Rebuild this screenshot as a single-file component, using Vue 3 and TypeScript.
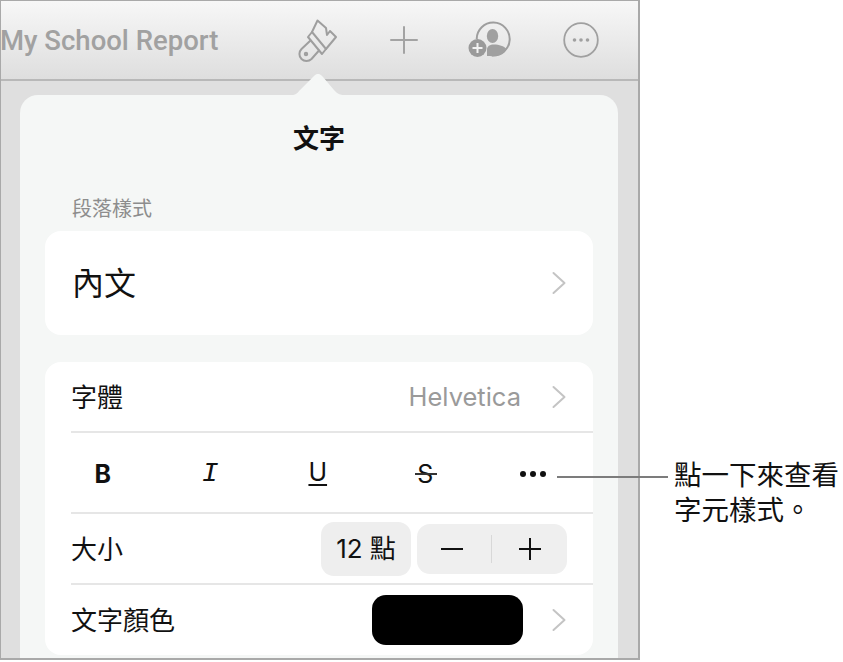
<script setup lang="ts">
const formats = [
  { key: 'b', label: 'B' },
  { key: 'i', label: 'I' },
  { key: 'u', label: 'U' },
  { key: 's', label: 'S' },
]
</script>

<template>
  <main class="page">
    <section class="device">
      <header class="toolbar">
        <div class="doc-title">My School Report</div>
        <svg class="tool brush" viewBox="296 16 44 48" width="44" height="48" fill="none" stroke="#9e9e9e" stroke-width="2" stroke-linejoin="round" stroke-linecap="round">
          <path d="M317.500 20.500 L312 32 L326 49 L336 37 L330 31 L327 35 L326 28 Z" />
          <path d="M312 32 L308 37 L322 54 L326 49" />
          <path d="M310.500 40.500 L301.500 49 A 7 7 0 1 0 311.500 59 L319 50.500" />
          <circle cx="306" cy="54" r="1.200" />
        </svg>
        <svg class="tool plus" viewBox="0 0 30 30" width="30" height="30" stroke="#a3a3a3" stroke-width="2" stroke-linecap="round">
          <path d="M15 2 V28 M2 15 H28" />
        </svg>
        <svg class="tool person" viewBox="466 20 46 40" width="46" height="40">
          <path d="M476.700 39 A 16.500 16.500 0 1 1 492 55.500" fill="none" stroke="#9e9e9e" stroke-width="2" />
          <ellipse cx="492.500" cy="36" rx="5.700" ry="7" fill="#a0a0a0" />
          <path d="M487 56 V50 C487 46 490 44.500 494 44.500 C499 44.500 504 46 506.500 49 A 16.500 16.500 0 0 1 490 56 Z" fill="#a0a0a0" />
          <circle cx="477.500" cy="48" r="9" fill="#9a9a9a" />
          <path d="M477.500 43 V53 M472.500 48 H482.500" stroke="#f2f2f2" stroke-width="2" />
        </svg>
        <svg class="tool more" viewBox="0 0 36 36" width="36" height="36">
          <circle cx="18" cy="18" r="16.800" fill="none" stroke="#a0a0a0" stroke-width="1.800" />
          <circle cx="11.500" cy="18" r="1.800" fill="#a0a0a0" />
          <circle cx="18" cy="18" r="1.800" fill="#a0a0a0" />
          <circle cx="24.500" cy="18" r="1.800" fill="#a0a0a0" />
        </svg>
      </header>

      <div class="popover-wrap">
        <svg class="tail" viewBox="0 0 60 22" width="60" height="22">
          <path d="M0 22 C7 21 9 20 12 16 L25 3 C27 0.500 29 0 30 0 C31 0 33 0.500 35 3 L46 16 C49 20 53 21 60 22 Z" fill="#f5f7f6" />
        </svg>
        <div class="popover">
          <h1 class="pop-title">文字</h1>
          <h2 class="section-label">段落樣式</h2>
          <div class="group style-group">
            <span class="style-name">內文</span>
            <svg class="chevron" viewBox="0 0 14 24" width="14" height="24"><path d="M1.500 2 L12.500 12 L1.500 22" /></svg>
          </div>
          <div class="group main-group">
            <div class="row font-row">
              <span class="label">字體</span>
              <span class="value">Helvetica</span>
              <svg class="chevron" viewBox="0 0 14 24" width="14" height="24"><path d="M1.500 2 L12.500 12 L1.500 22" /></svg>
            </div>
            <div class="row format-row">
              <span v-for="f in formats" :key="f.key" class="fmt" :class="'fmt-' + f.key">{{ f.label }}</span>
              <span class="fmt fmt-more"><i></i><i></i><i></i></span>
            </div>
            <div class="row size-row">
              <span class="label">大小</span>
              <span class="size-pill">12 點</span>
              <div class="stepper">
                <svg viewBox="0 0 24 24" width="24" height="24"><path d="M1 12 H23" /></svg>
                <i class="step-sep"></i>
                <svg viewBox="0 0 24 24" width="24" height="24"><path d="M1 12 H23 M12 1 V23" /></svg>
              </div>
            </div>
            <div class="row color-row">
              <span class="label">文字顏色</span>
              <span class="swatch"></span>
              <svg class="chevron" viewBox="0 0 14 24" width="14" height="24"><path d="M1.500 2 L12.500 12 L1.500 22" /></svg>
            </div>
          </div>
        </div>
      </div>
    </section>

    <div class="callout">
      <span class="callout-line"></span>
      <p class="callout-text">點一下來查看<br />字元樣式。</p>
    </div>
  </main>
</template>

<style scoped>
.page {
  position: relative;
  width: 843px;
  height: 662px;
  background: #fff;
  overflow: hidden;
  font-family: Inter, "Noto Sans CJK TC", sans-serif;
  color: #111;
}
.device {
  width: 640px;
  height: 660px;
  box-sizing: border-box;
  border: 1px solid #a9a9a9;
  border-width: 1px 2px 2px 1px;
  background: #dfdfdf;
  overflow: hidden;
}
.toolbar {
  height: 78px;
  border-bottom: 2px solid #b8b8b8;
  background: linear-gradient(#f7f7f7, #dedede);
  display: flex;
  align-items: center;
}
.doc-title {
  width: 296px;
  flex: none;
  font: 500 27.500px/1 Roboto, Inter, sans-serif;
  color: #a1a1a1;
  white-space: nowrap;
  margin-left: -1px;
  padding-top: 2px;
}
.tool { flex: none; }
.brush { margin-left: 0; }
.plus { margin-left: 49px; }
.person { margin-left: 47px; }
.more { margin-left: 51px; }

.popover-wrap {
  position: relative;
  padding: 14px 0 0 19px;
}
.tail {
  position: absolute;
  left: 287px;
  top: -7px;
}
.popover {
  width: 598px;
  height: 580px;
  box-sizing: border-box;
  background: #f5f7f6;
  border-radius: 18px 18px 0 0;
  padding: 0 25px;
  display: flex;
  flex-direction: column;
}
.pop-title {
  margin: 26px 0 0;
  text-align: center;
  font-size: 26px;
  line-height: 36px;
  font-weight: 700;
  color: #111;
}
.section-label {
  margin: 39px 0 0 27px;
  font-size: 20px;
  line-height: 26px;
  font-weight: 400;
  color: #8d8d8d;
}
.group {
  background: #fff;
  border-radius: 16px;
}
.style-group {
  margin-top: 9px;
  height: 104px;
  padding: 0 27px 0 27px;
  display: flex;
  align-items: center;
  justify-content: space-between;
}
.style-name {
  font-size: 32px;
  font-weight: 400;
  color: #111;
  margin-bottom: 4px;
}
.chevron {
  flex: none;
  fill: none;
  stroke: #c4c4c4;
  stroke-width: 2;
  stroke-linecap: round;
  stroke-linejoin: round;
}
.main-group {
  margin-top: 27px;
  height: 293px;
  padding-left: 26px;
}
.row {
  display: flex;
  align-items: center;
  box-sizing: border-box;
  border-bottom: 2px solid #e6e6e6;
  padding-right: 27px;
}
.label {
  font-size: 26px;
  color: #111;
  margin-bottom: 3px;
}
.font-row { height: 71px; }
.value {
  margin-left: auto;
  margin-right: 31px;
  font: 400 25.500px/1 Inter, sans-serif;
  color: #9a9a9a;
}
.format-row {
  height: 81px;
  margin-left: -22px;
  padding-right: 0;
  border-bottom: 0;
  position: relative;
}
.format-row::after {
  content: "";
  position: absolute;
  left: 22px;
  right: 0;
  bottom: 0;
  border-bottom: 2px solid #e6e6e6;
}
.fmt {
  flex: none;
  width: 107.500px;
  text-align: center;
  font-size: 25px;
  line-height: 30px;
  color: #111;
}
.fmt-b { font-weight: 700; }
.fmt-i { font-family: "Liberation Mono", monospace; font-style: italic; font-size: 28px; }
.fmt-u { text-decoration: underline; text-decoration-thickness: 2px; text-underline-offset: 3px; margin-bottom: 4px; }
.fmt-s { position: relative; }
.fmt-s::after {
  content: "";
  position: absolute;
  left: 43px;
  top: 14px;
  width: 22px;
  height: 2px;
  background: #333;
}
.fmt-more {
  display: flex;
  justify-content: center;
  gap: 4px;
}
.fmt-more i {
  width: 6px;
  height: 6px;
  border-radius: 50%;
  background: #111;
}
.size-row {
  height: 71px;
  padding-right: 26px;
}
.size-pill {
  margin-left: auto;
  width: 90px;
  height: 54px;
  box-sizing: border-box;
  padding-bottom: 5px;
  border-radius: 13px;
  background: #eeeeee;
  display: flex;
  align-items: center;
  justify-content: center;
  font-size: 26px;
}
.stepper {
  margin-left: 6px;
  width: 150px;
  height: 50px;
  border-radius: 13px;
  background: #efefef;
  display: flex;
  align-items: center;
  justify-content: space-between;
  padding: 0 25px 0 23px;
  box-sizing: border-box;
}
.stepper svg {
  stroke: #111;
  stroke-width: 2;
  fill: none;
}
.step-sep {
  width: 1px;
  height: 28px;
  background: #d8d8d8;
}
.color-row {
  height: 70px;
  border-bottom: 0;
}
.swatch {
  margin-left: auto;
  width: 151px;
  height: 50px;
  border-radius: 14px;
  background: #000;
  margin-right: 29px;
}
.callout {
  position: absolute;
  left: 557px;
  top: 458px;
  display: flex;
  align-items: flex-start;
}
.callout-line {
  width: 111px;
  height: 2px;
  margin-top: 18px;
  background: #7c7c7c;
}
.callout-text {
  margin: 0 0 0 6px;
  font-size: 27.500px;
  line-height: 35px;
  color: #111;
  white-space: nowrap;
}
</style>
